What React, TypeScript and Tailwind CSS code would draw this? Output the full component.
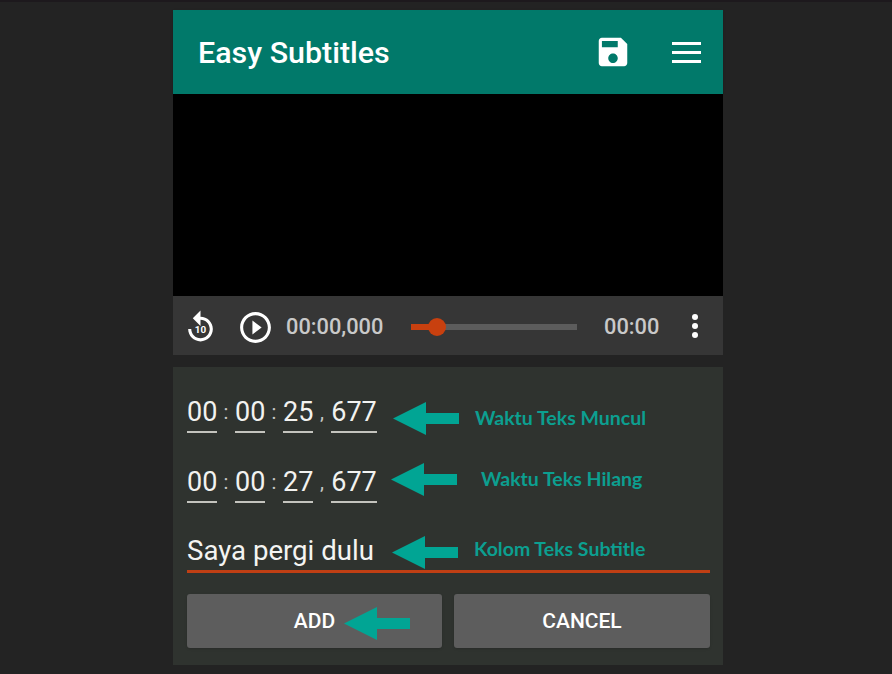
const roboto = { fontFamily: 'Roboto, sans-serif' };

function Arrow({ className = '' }: { className?: string }) {
  return (
    <svg viewBox="0 0 66 33" className={`h-[33px] w-[66px] shrink-0 ${className}`} fill="#01a594">
      <path d="M0 16.5 33 0V11H66V22H33V33Z" />
    </svg>
  );
}

function Field({ value, width }: { value: string; width: string }) {
  return (
    <span className={`block h-[40px] border-b-2 border-[#c4c4be] text-center text-[27px] leading-[38px] text-[#f2f2f0] ${width}`}>
      {value}
    </span>
  );
}

function Sep({ char }: { char: string }) {
  return <span className="block w-[18px] text-center text-[20px] leading-[38px] text-[#c8c8c4]">{char}</span>;
}

function TimeRow({ parts }: { parts: string[] }) {
  return (
    <div className="flex w-[190px] shrink-0 items-start">
      <Field value={parts[0]} width="w-[30px]" />
      <Sep char=":" />
      <Field value={parts[1]} width="w-[30px]" />
      <Sep char=":" />
      <Field value={parts[2]} width="w-[30px]" />
      <Sep char="," />
      <Field value={parts[3]} width="w-[46px]" />
    </div>
  );
}

function Label({ children, className = '' }: { children: string; className?: string }) {
  return (
    <span className={`whitespace-nowrap text-[19.5px] font-bold leading-none text-[#0c9f90] ${className}`} style={{ fontFamily: 'Lato, sans-serif' }}>
      {children}
    </span>
  );
}

export default function App() {
  return (
    <div className="h-[674px] w-[892px] overflow-hidden bg-[#232323]" style={roboto}>
      <div className="h-[2px] bg-[#1d191d]" />
      <div className="mx-auto mt-[8px] w-[550px] translate-x-[2px]">
        <header className="flex h-[84px] items-center bg-[#01796a] pl-[25px] pr-[22px] shadow">
          <h1 className="mt-[2px] flex-1 text-[30.4px] font-medium leading-none text-white">Easy Subtitles</h1>
          <svg viewBox="0 0 24 24" className="mr-[40px] h-[38px] w-[38px]" fill="#fff">
            <path d="M17 3H5c-1.11 0-2 .9-2 2v14c0 1.1.89 2 2 2h14c1.1 0 2-.9 2-2V7l-4-4zm-5 16c-1.66 0-3-1.34-3-3s1.34-3 3-3 3 1.34 3 3-1.34 3-3 3zm3-10H5V5h10v4z" />
          </svg>
          <div className="flex w-[29px] flex-col gap-[6px]">
            <span className="h-[3px] bg-white" />
            <span className="h-[3px] bg-white" />
            <span className="h-[3px] bg-white" />
          </div>
        </header>

        <div className="h-[202px] bg-black" />

        <div className="flex h-[59px] items-center bg-[#363636] pl-[9px] pt-[3px]">
          <svg viewBox="0 0 24 24" className="h-[37px] w-[37px]" fill="#fff">
            <path d="M12 5V1L7 6l5 5V7c3.3 0 6 2.7 6 6s-2.7 6-6 6-6-2.7-6-6H4c0 4.4 3.6 8 8 8s8-3.6 8-8-3.6-8-8-8z" />
            <text x="12" y="15.8" textAnchor="middle" fontSize="6.4" fontWeight="700" fill="#fff" fontFamily="Roboto, sans-serif">10</text>
          </svg>
          <svg viewBox="0 0 24 24" className="ml-[18px] h-[37px] w-[37px]" fill="#fff">
            <path d="M10 16.5l6-4.5-6-4.5v9zM12 2C6.48 2 2 6.48 2 12s4.48 10 10 10 10-4.48 10-10S17.52 2 12 2zm0 18c-4.41 0-8-3.59-8-8s3.59-8 8-8 8 3.59 8 8-3.59 8-8 8z" />
          </svg>
          <span className="ml-[12px] w-[125px] text-[21.8px] font-medium text-[#c9c9c9]">00:00,000</span>
          <div className="relative h-[6px] w-[166px] bg-[#5c5c5c]">
            <div className="h-full w-[26px] bg-[#c8400f]" />
            <span className="absolute left-[17px] top-[-6px] h-[18px] w-[18px] rounded-full bg-[#c8400f]" />
          </div>
          <span className="ml-[27px] text-[21.8px] font-medium text-[#c9c9c9]">00:00</span>
          <div className="ml-[33px] mb-[3px] flex flex-col gap-[3px]">
            <span className="h-[6px] w-[6px] rounded-full bg-white" />
            <span className="h-[6px] w-[6px] rounded-full bg-white" />
            <span className="h-[6px] w-[6px] rounded-full bg-white" />
          </div>
        </div>

        <form className="mt-[12px] flex h-[298px] flex-col bg-[#2f332f] pl-[14px] pr-[13px] pt-[26px]">
          <div className="flex h-[40px] items-start">
            <TimeRow parts={['00', '00', '25', '677']} />
            <Arrow className="ml-[16px] mt-[9px]" />
            <Label className="ml-[16px] mt-[15px]">Waktu Teks Muncul</Label>
          </div>
          <div className="mt-[30px] flex h-[40px] items-start">
            <TimeRow parts={['00', '00', '27', '677']} />
            <Arrow className="ml-[14px]" />
            <Label className="ml-[24px] mt-[6px]">Waktu Teks Hilang</Label>
          </div>
          <div className="relative mt-[30px] flex h-[40px] items-start border-b-[3px] border-[#c03f14]">
            <span className="w-[205px] shrink-0 text-[27.6px] leading-[36px] text-[#f4f4f2]">Saya pergi dulu</span>
            <Arrow className="mt-[3px]" />
            <Label className="ml-[16px] mt-[6px]">Kolom Teks Subtitle</Label>
          </div>
          <div className="mt-[21px] flex gap-[12px]">
            <button type="button" className="relative h-[54px] w-[255px] rounded-[3px] bg-[#5d5d5d] pt-[2px] text-[21px] font-medium text-white shadow">
              ADD
              <Arrow className="absolute left-[157px] top-[13px]" />
            </button>
            <button type="button" className="h-[54px] w-[256px] rounded-[3px] bg-[#5d5d5d] pt-[2px] text-[21px] font-medium text-white shadow">
              CANCEL
            </button>
          </div>
        </form>
      </div>
    </div>
  );
}
